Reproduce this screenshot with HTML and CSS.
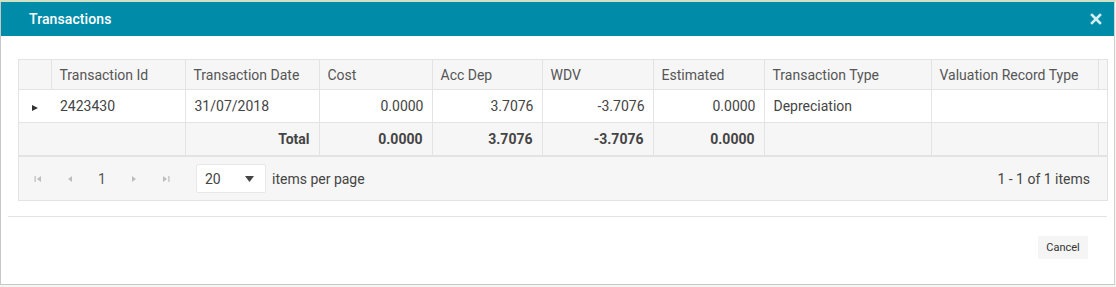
FILE: index.html
```html
<!DOCTYPE html>
<html>
<head>
<meta charset="utf-8">
<link rel="stylesheet" href="styles.css">
</head>
<body>
<div class="backdrop-top"></div>
<div class="dialog">
  <div class="titlebar">
    <span class="title">Transactions</span>
    <svg class="close" width="12" height="12" viewBox="0 0 12 12"><path d="M2 2 L10 10 M10 2 L2 10" stroke="#d4eef3" stroke-width="2.6" stroke-linecap="square"/></svg>
  </div>
  <div class="content">
    <div class="grid">
      <div class="grid-head">
        <table class="tbl">
          <colgroup><col class="c0"><col class="c1"><col class="c2"><col class="c3"><col class="c4"><col class="c5"><col class="c6"><col class="c7"><col class="c8"></colgroup>
          <tr>
            <th></th><th>Transaction Id</th><th>Transaction Date</th><th>Cost</th><th>Acc Dep</th><th>WDV</th><th>Estimated</th><th>Transaction Type</th><th>Valuation Record Type</th>
          </tr>
        </table>
      </div>
      <div class="grid-body">
        <table class="tbl">
          <colgroup><col class="c0"><col class="c1"><col class="c2"><col class="c3"><col class="c4"><col class="c5"><col class="c6"><col class="c7"><col class="c8"></colgroup>
          <tr>
            <td class="exp"><span class="tri"></span></td><td>2423430</td><td>31/07/2018</td><td class="num">0.0000</td><td class="num">3.7076</td><td class="num">-3.7076</td><td class="num">0.0000</td><td>Depreciation</td><td class="last"></td>
          </tr>
        </table>
      </div>
      <div class="grid-foot">
        <table class="tbl">
          <colgroup><col class="c0"><col class="c1"><col class="c2"><col class="c3"><col class="c4"><col class="c5"><col class="c6"><col class="c7"><col class="c8"></colgroup>
          <tr>
            <td class="exp"></td><td></td><td class="num b">Total</td><td class="num b">0.0000</td><td class="num b">3.7076</td><td class="num b">-3.7076</td><td class="num b">0.0000</td><td></td><td></td>
          </tr>
        </table>
      </div>
      <div class="pager">
        <div class="nav">
          <svg width="8" height="8" viewBox="0 0 8 8"><rect x="0.5" y="1" width="1.2" height="6" fill="#bdbdbd"/><path d="M7 1 L3 4 L7 7 Z" fill="#bdbdbd"/></svg>
        </div>
        <div class="nav">
          <svg width="8" height="8" viewBox="0 0 8 8"><path d="M6 1 L2 4 L6 7 Z" fill="#bdbdbd"/></svg>
        </div>
        <div class="nav page">1</div>
        <div class="nav">
          <svg width="8" height="8" viewBox="0 0 8 8"><path d="M2 1 L6 4 L2 7 Z" fill="#bdbdbd"/></svg>
        </div>
        <div class="nav">
          <svg width="8" height="8" viewBox="0 0 8 8"><path d="M1 1 L5 4 L1 7 Z" fill="#bdbdbd"/><rect x="6.3" y="1" width="1.2" height="6" fill="#bdbdbd"/></svg>
        </div>
        <div class="sizes">
          <span>20</span>
          <svg width="9" height="6" viewBox="0 0 9 6"><path d="M0 0 L9 0 L4.5 6 Z" fill="#444"/></svg>
        </div>
        <span class="ipp">items per page</span>
        <span class="info">1 - 1 of 1 items</span>
      </div>
    </div>
  </div>
  <div class="actions">
    <button class="btn">Cancel</button>
  </div>
</div>
</body>
</html>
```
FILE: styles.css
```css
* { box-sizing: border-box; }
html, body { margin: 0; padding: 0; }
body {
  width: 1116px;
  height: 287px;
  overflow: hidden;
  background: #f4f6f1;
  font-family: Roboto, "Liberation Sans", sans-serif;
}
.backdrop-top {
  height: 2px;
  background: #cfe0c4;
}
.dialog {
  width: 1115px;
  height: 283px;
  background: #fff;
  border: 1px solid #c8c8c8;
  border-top: none;
  border-right-color: #d0d0d0;
}
.titlebar {
  height: 34px;
  background: #008ca8;
  display: flex;
  align-items: center;
  justify-content: space-between;
  padding: 0 12px 0 28px;
}
.title {
  color: #fff;
  font-size: 14px;
  font-weight: 500;
  letter-spacing: 0.1px;
}
.close { display: block; margin-top: 0; }
.content {
  padding: 23px 7px 0 17px;
}
.grid {
  border: 1px solid #e3e3e3;
  width: 1090px;
}
.tbl {
  border-collapse: collapse;
  table-layout: fixed;
  width: 1079px;
  font-size: 14px;
  color: #444;
}
.c0 { width: 32px; }
.c1 { width: 134px; }
.c2 { width: 134px; }
.c3 { width: 113px; }
.c4 { width: 110px; }
.c5 { width: 111px; }
.c6 { width: 111px; }
.c7 { width: 167px; }
.c8 { width: 167px; }
.grid-head {
  background: #f6f6f6;
  padding-right: 10px;
  border-right: none;
}
.grid-head th {
  height: 29px;
  font-weight: 400;
  text-align: left;
  padding: 0 8px;
  color: #555;
  border-left: 1px solid #e3e3e3;
  white-space: nowrap;
}
.grid-head th:first-child { border-left: none; }
.grid-head .tbl { border-right: 1px solid #e3e3e3; }
.grid-body {
  border-top: 1px solid #e3e3e3;
  background: #fff;
}
.grid-body .tbl { width: 1089px; }
.grid-body .c8 { width: 177px; }
.grid-body td {
  height: 32px;
  padding: 0 8px 0 9px;
  border-left: 1px solid #e3e3e3;
  white-space: nowrap;
}
.grid-body td.exp { border-left: none; }
.grid-body td:nth-child(2) { border-left: none; }
.exp { padding: 0 !important; text-align: center; }
.tri {
  display: inline-block;
  width: 0; height: 0;
  border-top: 3.5px solid transparent;
  border-bottom: 3.5px solid transparent;
  border-left: 6px solid #333;
  margin-left: 0;
}
.num { text-align: right; }
.b { font-weight: 700; }
.grid-foot {
  background: #f6f6f6;
  border-top: 1px solid #e3e3e3;
  border-bottom: 2px solid #e3e3e3;
  padding-right: 10px;
}
.grid-foot .tbl { border-right: 1px solid #e3e3e3; }
.grid-foot td {
  height: 32px;
  padding: 0 9px;
  border-left: 1px solid #e3e3e3;
  white-space: nowrap;
}
.grid-foot td:first-child, .grid-foot td:nth-child(2) { border-left: none; }
.pager {
  height: 43px;
  background: #f6f6f6;
  display: flex;
  align-items: center;
  padding: 0 17px 0 3px;
  font-size: 14px;
  color: #444;
}
.nav {
  width: 32px;
  height: 28px;
  display: flex;
  align-items: center;
  justify-content: center;
}
.nav svg { display: block; }
.page { color: #555; }
.sizes {
  margin-left: 14px;
  width: 70px;
  height: 29px;
  background: #fff;
  border: 1px solid #e8e8e8;
  border-radius: 2px;
  display: flex;
  align-items: center;
  justify-content: space-between;
  padding: 0 11px 0 8px;
}
.ipp { margin-left: 6px; }
.info { margin-left: auto; }
.actions {
  margin: 15px 7px 0 7px;
  border-top: 1px solid #e3e3e3;
  padding: 19px 19px 0 0;
  display: flex;
  justify-content: flex-end;
}
.btn {
  font-family: Roboto, "Liberation Sans", sans-serif;
  font-size: 11px;
  color: #333;
  background: #f5f5f5;
  border: none;
  height: 23px;
  width: 50px;
  padding: 0;
}
```
